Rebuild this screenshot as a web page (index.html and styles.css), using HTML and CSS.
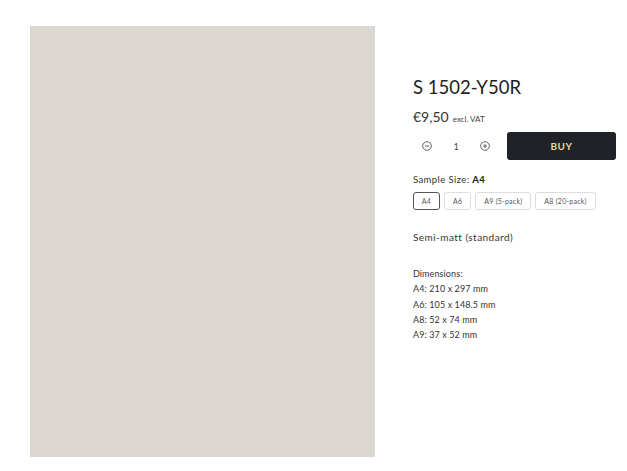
FILE: index.html
```html
<!DOCTYPE html>
<html lang="en">
<head>
<meta charset="utf-8">
<link rel="stylesheet" href="styles.css">
<title>S 1502-Y50R</title>
</head>
<body>
<main class="product">
  <div class="swatch"></div>
  <section class="details">
    <h1 class="title">S 1502-Y50R</h1>
    <div class="price"><span class="amount">€9,50</span> <span class="vat">excl. VAT</span></div>
    <div class="buy-row">
      <div class="qty">
        <button class="qty-btn" aria-label="Decrease">
          <svg width="10" height="10" viewBox="0 0 10 10"><circle cx="5" cy="5" r="4.3" fill="none" stroke="#555" stroke-width="0.9"/><path d="M3 5h4" stroke="#555" stroke-width="0.9"/></svg>
        </button>
        <span class="qty-val">1</span>
        <button class="qty-btn" aria-label="Increase">
          <svg width="10" height="10" viewBox="0 0 10 10"><circle cx="5" cy="5" r="4.3" fill="none" stroke="#555" stroke-width="0.9"/><path d="M3 5h4M5 3v4" stroke="#555" stroke-width="0.9"/></svg>
        </button>
      </div>
      <button class="buy">BUY</button>
    </div>
    <div class="size-label">Sample Size: <b>A4</b></div>
    <div class="sizes">
      <button class="size selected">A4</button>
      <button class="size">A6</button>
      <button class="size">A9 (5-pack)</button>
      <button class="size">A8 (20-pack)</button>
    </div>
    <p class="finish">Semi-matt (standard)</p>
    <div class="dims">
      <div>Dimensions:</div>
      <div>A4: 210 x 297 mm</div>
      <div>A6: 105 x 148.5 mm</div>
      <div>A8: 52 x 74 mm</div>
      <div>A9: 37 x 52 mm</div>
    </div>
  </section>
</main>
</body>
</html>
```
FILE: styles.css
```css
* { box-sizing: border-box; }
body {
  margin: 0;
  background: #fff;
  font-family: "Lato", "Open Sans", sans-serif;
  color: #2a2a2a;
}
.product {
  display: flex;
  padding: 26px 0 0 30px;
  gap: 38px;
}
.swatch {
  width: 345px;
  height: 431px;
  background: #dbd6cf;
  flex: none;
}
.details {
  width: 204px;
  padding-top: 49px;
}
.title {
  margin: 0;
  font-size: 18.5px;
  font-weight: 400;
  line-height: 24px;
  color: #222;
}
.price {
  margin-top: 7px;
  line-height: 20px;
}
.amount { font-size: 14px; color: #333; }
.vat { font-size: 8px; color: #444; }
.buy-row {
  display: flex;
  align-items: center;
  margin-top: 3px;
}
.qty {
  display: flex;
  align-items: center;
  width: 94px;
  padding-left: 9px;
}
.qty-btn {
  border: 0;
  background: none;
  padding: 0;
  width: 10px;
  height: 10px;
  display: flex;
}
.qty-val {
  width: 48px;
  text-align: center;
  font-size: 9px;
  color: #444;
}
.buy {
  width: 109px;
  height: 28px;
  background: #1f2226;
  color: #e4dc9c;
  border: 0;
  border-radius: 3px;
  font-family: inherit;
  font-weight: 700;
  font-size: 10px;
  letter-spacing: 0.5px;
}
.size-label {
  margin-top: 14px;
  font-size: 9.5px;
  letter-spacing: 0.4px;
  color: #333;
}
.size-label b { font-weight: 700; color: #222; }
.sizes {
  display: flex;
  gap: 4px;
  margin-top: 7px;
}
.size {
  height: 18px;
  padding: 0 8px;
  background: #fff;
  border: 1px solid #ddd;
  border-radius: 3px;
  font-family: inherit;
  font-size: 7px;
  letter-spacing: 0.25px;
  color: #555;
}
.size.selected {
  border-color: #555;
  width: 27px;
  padding: 0;
}
.finish {
  margin: 21px 0 0;
  font-size: 10px;
  letter-spacing: 0.45px;
  color: #333;
}
.dims {
  margin-top: 23px;
  font-size: 9px;
  letter-spacing: 0.1px;
  line-height: 15.3px;
  color: #333;
}
```
